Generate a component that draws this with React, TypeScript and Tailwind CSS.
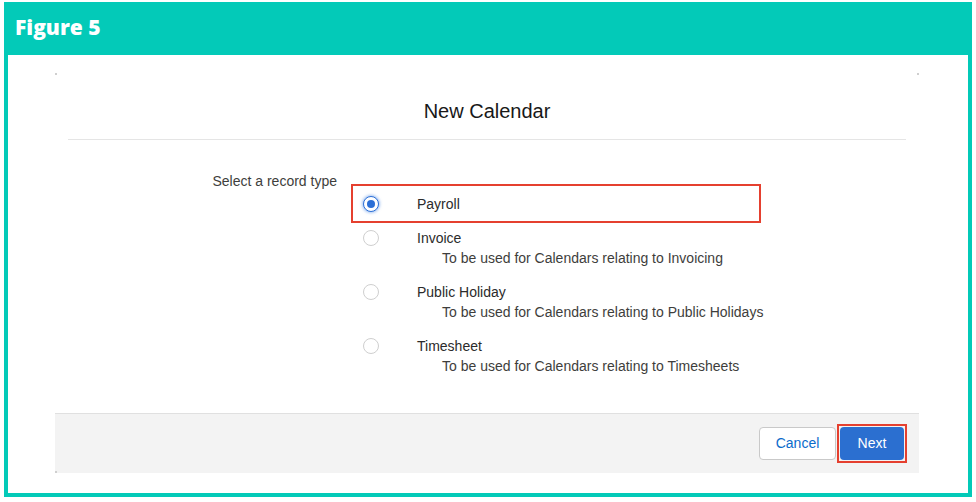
import React from 'react';

const items = [
  { name: 'Payroll', desc: '' },
  { name: 'Invoice', desc: 'To be used for Calendars relating to Invoicing' },
  { name: 'Public Holiday', desc: 'To be used for Calendars relating to Public Holidays' },
  { name: 'Timesheet', desc: 'To be used for Calendars relating to Timesheets' },
];

function Radio({ checked }: { checked?: boolean }) {
  if (checked) {
    return (
      <span className="flex h-[16px] w-[16px] shrink-0 items-center justify-center rounded-full border border-[#2b6fd6] bg-white shadow-[0_0_3px_1px_rgba(80,140,230,0.55)]">
        <span className="h-[8px] w-[8px] rounded-full bg-[#2b6fd6]" />
      </span>
    );
  }
  return <span className="h-[16px] w-[16px] shrink-0 rounded-full border border-[#cfcfcf] bg-white" />;
}

export default function App() {
  return (
    <div className="h-[502px] w-[976px] bg-white pl-[4px] pt-[2px] font-['Liberation_Sans',Arial,sans-serif]">
      <div className="flex h-[495px] w-[968px] flex-col bg-[#03cab8] px-[4px] pb-[4px]">
        {/* Figure header */}
        <div className="flex h-[53px] items-center pl-[7px] pb-[2px]">
          <span className="font-['Open_Sans',sans-serif] text-[21px] font-extrabold text-white">Figure 5</span>
        </div>

        {/* Screenshot body */}
        <div className="relative flex-1 bg-white pl-[47px] pt-[18px]">
          <div className="relative flex h-[400px] w-[864px] flex-col">
            <span className="absolute left-0 top-0 h-[2px] w-[2px] bg-[#cfcfcf]" />
            <span className="absolute right-0 top-0 h-[2px] w-[2px] bg-[#cfcfcf]" />
            <span className="absolute bottom-0 left-0 h-[2px] w-[2px] bg-[#cfcfcf]" />

            {/* Modal header */}
            <div className="mx-[13px] flex h-[67px] items-center justify-center border-b border-[#e5e5e5] pt-[9px]">
              <h1 className="text-[20px] font-normal text-[#181818]">New Calendar</h1>
            </div>

            {/* Modal content */}
            <div className="flex flex-1 pt-[31px] text-[14px] leading-[20px] text-[#3e3e3c]">
              <div className="w-[296px] pr-[14px] text-right">Select a record type</div>
              <div className="flex flex-col pt-[13px]">
                {items.map((item, i) =>
                  i === 0 ? (
                    <div key={item.name} className="flex h-[39px] w-[410px] items-center border-2 border-[#e5402f] pl-[10px]">
                      <Radio checked />
                      <span className="ml-[38px] text-[#2b2b2b]">{item.name}</span>
                    </div>
                  ) : (
                    <div key={item.name} className={i === 1 ? 'mt-[5px]' : 'mt-[14px]'}>
                      <div className="flex h-[20px] items-center pl-[12px]">
                        <Radio />
                        <span className="ml-[38px] text-[#2b2b2b]">{item.name}</span>
                      </div>
                      <div className="h-[20px] pl-[91px]">{item.desc}</div>
                    </div>
                  )
                )}
              </div>
            </div>

            {/* Modal footer */}
            <div className="flex h-[60px] items-center justify-end border-t border-[#e0e0e0] bg-[#f3f3f3] pr-[12px]">
              <button className="h-[33px] w-[77px] rounded-[4px] border border-[#c9c9c9] bg-white text-[14px] text-[#0b6bcb]">
                Cancel
              </button>
              <div className="ml-[1px] border-2 border-[#e5402f] p-[1px]">
                <button className="block h-[33px] w-[64px] rounded-[4px] bg-[#2b6fd0] text-[14px] text-white">
                  Next
                </button>
              </div>
            </div>
          </div>
        </div>
      </div>
    </div>
  );
}
